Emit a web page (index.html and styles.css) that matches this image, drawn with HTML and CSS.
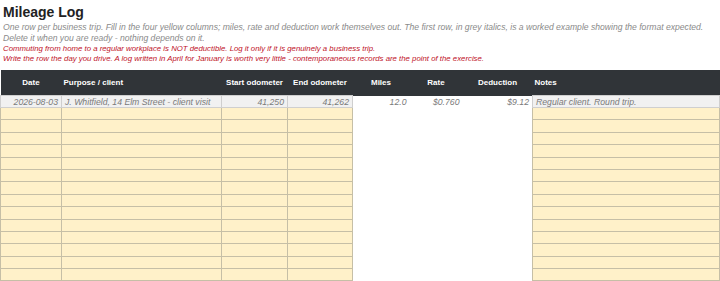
FILE: index.html
```html
<!DOCTYPE html>
<html>
<head>
<meta charset="utf-8">
<link rel="stylesheet" href="styles.css">
</head>
<body>
<header class="intro">
  <h1 class="title">Mileage Log</h1>
  <p class="note">One row per business trip. Fill in the four yellow columns; miles, rate and deduction work themselves out. The first row, in grey italics, is a worked example showing the format expected. Delete it when you are ready - nothing depends on it.</p>
  <p class="warn">Commuting from home to a regular workplace is NOT deductible. Log it only if it is genuinely a business trip.</p>
  <p class="warn">Write the row the day you drive. A log written in April for January is worth very little - contemporaneous records are the point of the exercise.</p>
</header>
<table class="log">
  <colgroup>
    <col class="c-date"><col class="c-purpose"><col class="c-start"><col class="c-end"><col class="c-miles"><col class="c-rate"><col class="c-ded"><col class="c-notes">
  </colgroup>
  <thead>
    <tr>
      <th>Date</th><th class="left">Purpose / client</th><th>Start odometer</th><th>End odometer</th><th>Miles</th><th>Rate</th><th>Deduction</th><th class="left">Notes</th>
    </tr>
  </thead>
  <tbody>
    <tr class="example">
      <td class="in num">2026-08-03</td><td class="in">J. Whitfield, 14 Elm Street - client visit</td><td class="in num">41,250</td><td class="in num">41,262</td><td class="calc num">12.0</td><td class="calc num">$0.760</td><td class="calc num">$9.12</td><td class="in">Regular client. Round trip.</td>
    </tr>
    <tr class="blank"><td class="in"></td><td class="in"></td><td class="in"></td><td class="in"></td><td class="calc"></td><td class="calc"></td><td class="calc"></td><td class="in"></td></tr>
    <tr class="blank"><td class="in"></td><td class="in"></td><td class="in"></td><td class="in"></td><td class="calc"></td><td class="calc"></td><td class="calc"></td><td class="in"></td></tr>
    <tr class="blank"><td class="in"></td><td class="in"></td><td class="in"></td><td class="in"></td><td class="calc"></td><td class="calc"></td><td class="calc"></td><td class="in"></td></tr>
    <tr class="blank"><td class="in"></td><td class="in"></td><td class="in"></td><td class="in"></td><td class="calc"></td><td class="calc"></td><td class="calc"></td><td class="in"></td></tr>
    <tr class="blank"><td class="in"></td><td class="in"></td><td class="in"></td><td class="in"></td><td class="calc"></td><td class="calc"></td><td class="calc"></td><td class="in"></td></tr>
    <tr class="blank"><td class="in"></td><td class="in"></td><td class="in"></td><td class="in"></td><td class="calc"></td><td class="calc"></td><td class="calc"></td><td class="in"></td></tr>
    <tr class="blank"><td class="in"></td><td class="in"></td><td class="in"></td><td class="in"></td><td class="calc"></td><td class="calc"></td><td class="calc"></td><td class="in"></td></tr>
    <tr class="blank"><td class="in"></td><td class="in"></td><td class="in"></td><td class="in"></td><td class="calc"></td><td class="calc"></td><td class="calc"></td><td class="in"></td></tr>
    <tr class="blank"><td class="in"></td><td class="in"></td><td class="in"></td><td class="in"></td><td class="calc"></td><td class="calc"></td><td class="calc"></td><td class="in"></td></tr>
    <tr class="blank"><td class="in"></td><td class="in"></td><td class="in"></td><td class="in"></td><td class="calc"></td><td class="calc"></td><td class="calc"></td><td class="in"></td></tr>
    <tr class="blank"><td class="in"></td><td class="in"></td><td class="in"></td><td class="in"></td><td class="calc"></td><td class="calc"></td><td class="calc"></td><td class="in"></td></tr>
    <tr class="blank"><td class="in"></td><td class="in"></td><td class="in"></td><td class="in"></td><td class="calc"></td><td class="calc"></td><td class="calc"></td><td class="in"></td></tr>
    <tr class="blank"><td class="in"></td><td class="in"></td><td class="in"></td><td class="in"></td><td class="calc"></td><td class="calc"></td><td class="calc"></td><td class="in"></td></tr>
    <tr class="blank"><td class="in"></td><td class="in"></td><td class="in"></td><td class="in"></td><td class="calc"></td><td class="calc"></td><td class="calc"></td><td class="in"></td></tr>
  </tbody>
</table>
</body>
</html>
```
FILE: styles.css
```css
html, body {
  margin: 0;
  padding: 0;
  background: #ffffff;
  font-family: "Liberation Sans", Arial, sans-serif;
}

.intro {
  box-sizing: border-box;
  padding: 4px 3px 0 3px;
  height: 70px;
}

.title {
  margin: 0;
  font-size: 14px;
  line-height: 16px;
  font-weight: bold;
  color: #222222;
}

.note {
  margin: 2px 0 0 0;
  font-size: 8.6px;
  line-height: 11px;
  font-style: italic;
  color: #8a8a8a;
}

.warn {
  margin: 0;
  font-size: 7.8px;
  line-height: 9.5px;
  font-style: italic;
  color: #c0121f;
}

.log {
  border-collapse: collapse;
  table-layout: fixed;
  width: 719px;
  margin: 0;
  font-size: 8px;
}

.c-date { width: 61px; }
.c-purpose { width: 160px; }
.c-start { width: 66px; }
.c-end { width: 65px; }
.c-miles { width: 57px; }
.c-rate { width: 53px; }
.c-ded { width: 70px; }
.c-notes { width: 187px; }

.log th {
  background: #303438;
  color: #ffffff;
  font-weight: bold;
  height: 25px;
  padding: 0 2px;
  text-align: center;
  white-space: nowrap;
  border: 0;
}

.log th.left { text-align: left; }

.log td {
  padding: 0 3px;
  height: 11.4px;
  white-space: nowrap;
  overflow: hidden;
  font-size: 8.7px;
}

.log td.in {
  border: 1px solid #c6bfa6;
}

.log td.calc {
  border: 0;
  background: #ffffff;
}

.example td {
  height: 11px;
  font-style: italic;
  color: #7a7a7a;
  line-height: 10px;
}

.example td.in {
  background: #f1f1f1;
  border-color: #cfcfcf;
}

.blank td.in {
  background: #fff1c9;
}

.num { text-align: right; }
```
